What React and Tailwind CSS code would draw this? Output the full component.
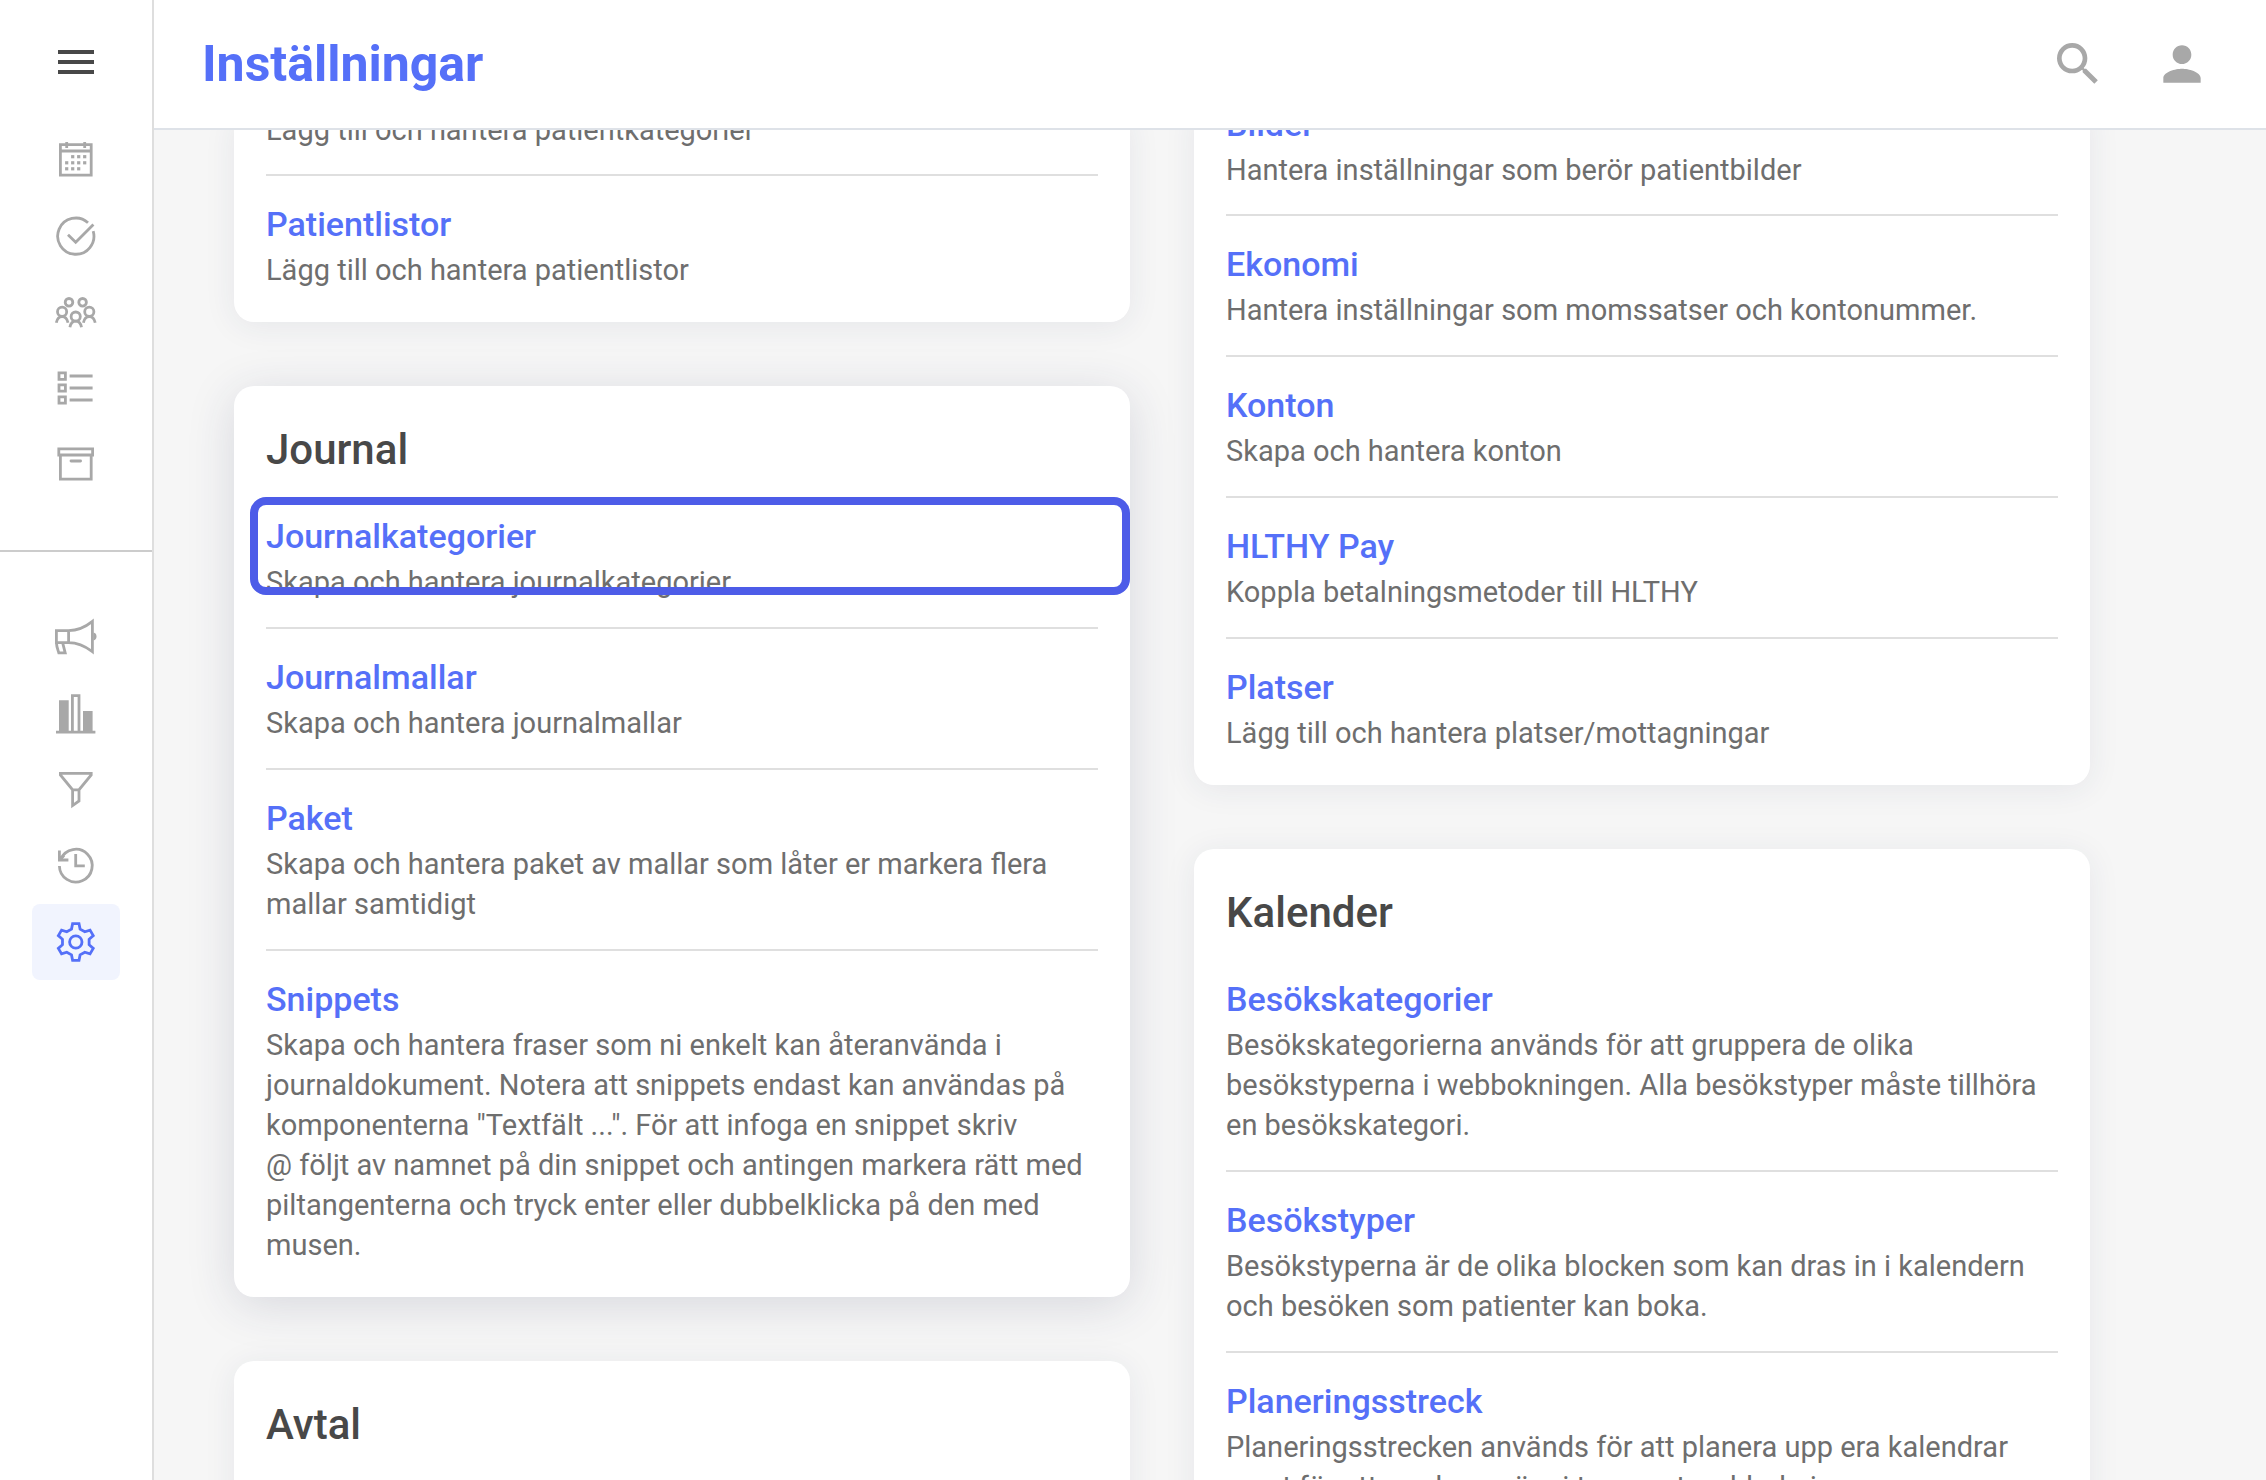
import React from "react";
import { MdMenu, MdPerson, MdSearch } from "react-icons/md";

const Icon = ({ children }) => (
  <svg
    viewBox="0 0 44 44"
    className="size-11"
    fill="none"
    stroke="currentColor"
    strokeWidth="2.8"
    aria-hidden="true"
  >
    {children}
  </svg>
);

const dots = [
  [18.7, 18.7], [24.7, 18.7], [30.7, 18.7],
  [12.7, 24.8], [18.7, 24.8], [24.7, 24.8], [30.7, 24.8],
  [12.7, 30.8], [18.7, 30.8], [24.7, 30.8],
];

const CalendarIcon = () => (
  <Icon>
    <path d="M6.4 6.7H37.2V37.2H6.4ZM6.4 13H37.2M12.7 4V10M30.7 4V10" />
    {dots.map(([x, y]) => (
      <rect key={`${x}-${y}`} x={x - 1.6} y={y - 1.6} width="3.2" height="3.2" fill="currentColor" stroke="none" />
    ))}
  </Icon>
);

const CheckIcon = () => (
  <Icon>
    <path d="M39.2 17.2A18.1 18.1 0 1 1 34 8.8M14 20.8L21.7 28.2L39.4 10.6" />
  </Icon>
);

const PeopleIcon = () => (
  <Icon>
    <circle cx="15" cy="12.3" r="3.8" />
    <circle cx="28.6" cy="12.3" r="3.8" />
    <circle cx="8.1" cy="21.8" r="4.6" />
    <circle cx="35.3" cy="21.8" r="4.6" />
    <circle cx="21.7" cy="26.6" r="4.6" />
    <path d="M2.3 32.8C3 29.4 5 26.6 8.1 26.6S13.3 29.4 14 32.8M29.4 32.8C30.1 29.4 32.2 26.6 35.3 26.6S40.5 29.4 41.2 32.8M15.9 37.2C16.6 33.8 18.6 31.2 21.7 31.2S26.8 33.8 27.5 37.2" />
  </Icon>
);

const ListIcon = () => (
  <Icon>
    <path d="M5 6.9H11.4V13.3H5ZM5 18.8H11.4V25.2H5ZM5 30.8H11.4V37.2H5ZM15.6 10H38.6M15.6 22H38.6M15.6 34H38.6" />
  </Icon>
);

const ArchiveIcon = () => (
  <Icon>
    <path d="M4.8 6.8H38.6V13H4.8ZM6.4 13V37.2H37.2V13" />
    <path d="M17 19H26.6" strokeLinecap="round" />
  </Icon>
);

const MegaphoneIcon = () => (
  <Icon>
    <path d="M14.6 14.6H2.4V26.6H14.6ZM14.6 14.6C23 14.6 31 11.4 38.4 5.4V35.6C31 30 23 26.6 14.6 26.6M2.4 26.6C2.6 31 4 34 4.8 36.9H11.2L8.6 26.6" />
    <path d="M39.4 16.6A4 4 0 0 1 39.4 24.4Z" fill="currentColor" stroke="none" />
  </Icon>
);

const ChartIcon = () => (
  <Icon>
    <path d="M2 40.2H41.4M18.4 40V3.6H25V40" />
    <path d="M5 8.2H14.7V40H5ZM29 19H38.6V40H29Z" fill="currentColor" stroke="none" />
  </Icon>
);

const FunnelIcon = () => (
  <Icon>
    <path d="M6.4 5.4H37.2V7L25 21.8V33L18.6 37.6V21.8L6.4 7ZM18.6 21.8H25" />
  </Icon>
);

const HistoryIcon = () => (
  <Icon>
    <path d="M5.4 22A16.4 16.4 0 1 0 6.8 15M21.7 10V21.8H30.8M5.4 6.6V16H14.4" />
    <path d="M6 16L10 11.4" />
  </Icon>
);

const tooth = [[-4.3, -12.9], [-3.2, -18.3], [3.2, -18.3], [4.3, -12.9]];
const gearPoints = [0, 1, 2, 3, 4, 5]
  .flatMap((k) => {
    const a = (k * Math.PI) / 3;
    return tooth.map(([x, y]) => [
      (21.8 + x * Math.cos(a) - y * Math.sin(a)).toFixed(2),
      (22 + x * Math.sin(a) + y * Math.cos(a)).toFixed(2),
    ].join(","));
  })
  .join(" ");

const GearIcon = () => (
  <Icon>
    <polygon points={gearPoints} />
    <circle cx="21.8" cy="22" r="6.2" />
  </Icon>
);

const primaryNav = [
  ["Kalender", CalendarIcon],
  ["Uppgifter", CheckIcon],
  ["Patienter", PeopleIcon],
  ["Listor", ListIcon],
  ["Arkiv", ArchiveIcon],
];

const secondaryNav = [
  ["Utskick", MegaphoneIcon],
  ["Statistik", ChartIcon],
  ["Filter", FunnelIcon],
  ["Historik", HistoryIcon],
  ["Inställningar", GearIcon],
];

const NavList = ({ items, active }) => (
  <ul className="flex flex-col px-8">
    {items.map(([label, Glyph]) => (
      <li key={label}>
        <a
          href="#"
          aria-label={label}
          aria-current={label === active ? "page" : undefined}
          className={
            label === active
              ? "flex h-19 items-center justify-center rounded-lg bg-[#f1f4fe] text-[#5570f8]"
              : "flex h-19 items-center justify-center rounded-lg text-[#a8a8a8]"
          }
        >
          <Glyph />
        </a>
      </li>
    ))}
  </ul>
);

const Card = ({ title, raised, children }) => (
  <section
    className={
      raised
        ? "rounded-[20px] bg-white px-8 pb-8 shadow-[0_8px_48px_rgba(40,50,90,0.15)]"
        : "rounded-[20px] bg-white px-8 pb-8 shadow-[0_4px_32px_rgba(40,50,90,0.08)]"
    }
  >
    {title && <h2 className="mb-1.5 pt-8 text-[42px] leading-16 font-medium text-[#484848]">{title}</h2>}
    <ul className="flex flex-col">{children}</ul>
  </section>
);

const Item = ({ title, flush, highlighted, children }) => (
  <li
    className={
      flush
        ? "relative pb-6"
        : "relative border-t-2 border-[#dfdfdf] pt-[26px] pb-[25px] first:border-t-0 last:pb-0"
    }
  >
    {title && (
      <a href="#" className="mb-1 block text-[34px] leading-11 font-medium text-[#5570f8]">
        {title}
      </a>
    )}
    <p className="text-[29px] leading-10 text-[#6e6e6e]">{children}</p>
    {highlighted && (
      <span className="pointer-events-none absolute top-[9px] -right-8 -left-4 h-[98px] rounded-2xl border-8 border-[#4d5ce8]" />
    )}
  </li>
);

export default function App() {
  return (
    <div className="flex h-screen overflow-hidden bg-[#f6f6f6] font-['Roboto',sans-serif]">
      <aside className="w-[154px] shrink-0 border-r-2 border-[#dedede] bg-white">
        <div className="flex h-[122px] justify-center pt-[38px]">
          <button type="button" aria-label="Meny" className="size-12 text-[#484848]">
            <MdMenu className="size-12" />
          </button>
        </div>
        <nav aria-label="Huvudmeny">
          <NavList items={primaryNav} />
          <hr className="my-12 border-t-2 border-[#cccccc]" />
          <NavList items={secondaryNav} active="Inställningar" />
        </nav>
      </aside>

      <div className="flex min-w-0 flex-1 flex-col">
        <header className="flex h-[130px] shrink-0 items-center justify-between border-b-2 border-[#dee2e8] bg-white px-12">
          <h1 className="text-[50px] leading-16 font-bold text-[#5570f8]">Inställningar</h1>
          <div className="flex gap-12 pr-2 text-[#a8a8a8]">
            <button type="button" aria-label="Sök">
              <MdSearch className="size-14" />
            </button>
            <button type="button" aria-label="Profil">
              <MdPerson className="size-14" />
            </button>
          </div>
        </header>

        <main className="grid min-h-0 flex-1 grid-cols-2 items-start gap-16 overflow-hidden pr-44 pl-20">
          <div className="-mt-5 flex flex-col gap-16">
            <Card>
              <Item flush>Lägg till och hantera patientkategorier</Item>
              <Item title="Patientlistor">Lägg till och hantera patientlistor</Item>
            </Card>
            <Card title="Journal" raised>
              <Item title="Journalkategorier" highlighted>Skapa och hantera journalkategorier</Item>
              <Item title="Journalmallar">Skapa och hantera journalmallar</Item>
              <Item title="Paket">
                Skapa och hantera paket av mallar som låter er markera flera mallar samtidigt
              </Item>
              <Item title="Snippets">
                Skapa och hantera fraser som ni enkelt kan återanvända i journaldokument. Notera att
                snippets endast kan användas på komponenterna "Textfält ...". För att infoga en
                snippet skriv @&nbsp;följt av namnet på din snippet och antingen markera rätt med
                piltangenterna och tryck enter eller dubbelklicka på den med musen.
              </Item>
            </Card>
            <Card title="Avtal">
              <Item>&nbsp;</Item>
            </Card>
          </div>

          <div className="-mt-7 flex flex-col gap-16">
            <Card>
              <Item flush title="Bilder">Hantera inställningar som berör patientbilder</Item>
              <Item title="Ekonomi">Hantera inställningar som momssatser och kontonummer.</Item>
              <Item title="Konton">Skapa och hantera konton</Item>
              <Item title="HLTHY Pay">Koppla betalningsmetoder till HLTHY</Item>
              <Item title="Platser">Lägg till och hantera platser/mottagningar</Item>
            </Card>
            <Card title="Kalender">
              <Item title="Besökskategorier">
                Besökskategorierna används för att gruppera de olika besökstyperna i webbokningen.
                Alla besökstyper måste tillhöra en besökskategori.
              </Item>
              <Item title="Besökstyper">
                Besökstyperna är de olika blocken som kan dras in i kalendern och besöken som
                patienter kan boka.
              </Item>
              <Item title="Planeringsstreck">
                Planeringsstrecken används för att planera upp era kalendrar samt för att markera
                när ni tar emot webbokningar.
              </Item>
            </Card>
          </div>
        </main>
      </div>
    </div>
  );
}
